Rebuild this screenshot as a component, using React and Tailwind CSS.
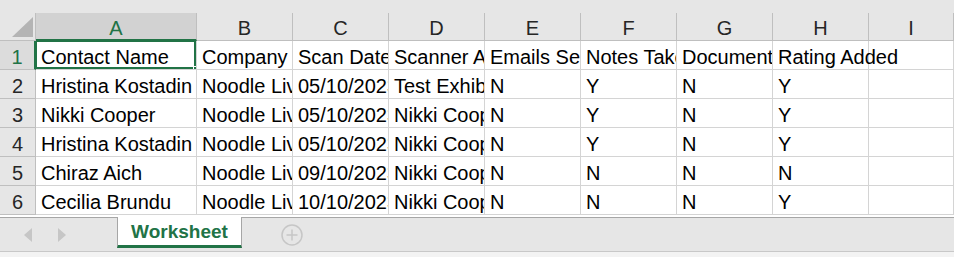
import React from 'react';

const cols = ['A', 'B', 'C', 'D', 'E', 'F', 'G', 'H', 'I'];

const rows = [
  ['Contact Name', 'Company', 'Scan Date', 'Scanner A', 'Emails Ser', 'Notes Take', 'Document', 'Rating Added', ''],
  ['Hristina Kostadin', 'Noodle Liv', '05/10/2023', 'Test Exhibi', 'N', 'Y', 'N', 'Y', ''],
  ['Nikki Cooper', 'Noodle Liv', '05/10/2023', 'Nikki Coop', 'N', 'Y', 'N', 'Y', ''],
  ['Hristina Kostadin', 'Noodle Liv', '05/10/2023', 'Nikki Coop', 'N', 'Y', 'N', 'Y', ''],
  ['Chiraz Aich', 'Noodle Liv', '09/10/2023', 'Nikki Coop', 'N', 'N', 'N', 'N', ''],
  ['Cecilia Brundu', 'Noodle Liv', '10/10/2023', 'Nikki Coop', 'N', 'N', 'N', 'Y', ''],
];

const App = () => {
  return (
    <div className="w-[954px] h-[257px] overflow-hidden bg-[#e6e6e6] flex flex-col text-[20px] text-black" style={{ fontFamily: '"Liberation Sans", Arial, sans-serif' }}>
      {/* bande du haut */}
      <div className="h-[13px] bg-[#e6e6e6]"></div>

      {/* grille */}
      <div className="grid grid-cols-[36px_161px_96px_96px_96px_96px_96px_96px_96px_1fr] bg-white">
        {/* coin */}
        <div className="h-[28px] bg-[#e6e6e6] border-r border-b border-[#bfbfbf] flex items-end justify-end pr-[2px] pb-[3px]">
          <svg width="21" height="20" viewBox="0 0 21 20">
            <polygon points="21,0 21,20 0,20" fill="#b4b4b4" />
          </svg>
        </div>
        {cols.map((c) => (
          <div
            key={c}
            className={`h-[28px] flex items-center justify-center pt-[3px] border-r border-b border-[#bfbfbf] ${c === 'A' ? 'bg-[#d2d2d2] text-[#217346] border-b-[#217346] border-b-2' : 'bg-[#e6e6e6] text-[#262626]'}`}
          >
            {c}
          </div>
        ))}

        {rows.map((row, i) => (
          <React.Fragment key={i}>
            <div className={`h-[29px] flex items-center justify-center pt-[3px] border-r border-b border-[#bfbfbf] ${i === 0 ? 'bg-[#dcdcdc] text-[#217346] border-r-2 border-r-[#217346]' : 'bg-[#e6e6e6] text-[#262626]'}`}>
              {i + 1}
            </div>
            {row.map((cell, j) => (
              <div
                key={j}
                className={`relative h-[29px] flex items-center pl-[5px] pt-[3px] whitespace-nowrap border-r border-b border-[#d4d4d4] ${i === 0 && j === 7 ? 'overflow-visible z-10' : 'overflow-hidden'}`}
              >
                {cell}
                {i === 0 && j === 0 && (
                  <>
                    <div className="absolute -left-[1px] -top-[1px] right-0 bottom-0 border-2 border-[#217346] pointer-events-none"></div>
                    <div className="absolute -right-[4px] -bottom-[4px] w-[7px] h-[7px] bg-[#217346] border border-white z-20"></div>
                  </>
                )}
              </div>
            ))}
          </React.Fragment>
        ))}
      </div>

      {/* barre des onglets */}
      <div className="h-[2px] bg-white"></div>
      <div className="h-[34px] bg-[#e6e6e6] border-t border-[#a6a6a6] flex items-stretch">
        <div className="w-[117px] flex items-center pl-[24px] gap-[24px]">
          <svg width="9" height="14" viewBox="0 0 9 14">
            <polygon points="8,0 8,14 0,7" fill="#c6c6c6" />
          </svg>
          <svg width="9" height="14" viewBox="0 0 9 14">
            <polygon points="1,0 1,14 9,7" fill="#c6c6c6" />
          </svg>
        </div>
        <div className="w-[125px] h-[31px] -mt-[1px] bg-white border-l border-r border-[#a6a6a6] border-b-[3px] border-b-[#217346] flex items-center justify-center pt-[3px] font-bold text-[19px] text-[#217346]">
          Worksheet
        </div>
        <div className="flex items-center pl-[39px]">
          <svg width="22" height="22" viewBox="0 0 22 22">
            <circle cx="11" cy="11" r="10" fill="none" stroke="#c6c6c6" strokeWidth="1.5" />
            <line x1="11" y1="5.5" x2="11" y2="16.5" stroke="#c6c6c6" strokeWidth="1.5" />
            <line x1="5.5" y1="11" x2="16.5" y2="11" stroke="#c6c6c6" strokeWidth="1.5" />
          </svg>
        </div>
      </div>
      <div className="flex-1 bg-[#f3f3f3] border-t border-[#c8c8c8]"></div>
    </div>
  );
};

export default App;
